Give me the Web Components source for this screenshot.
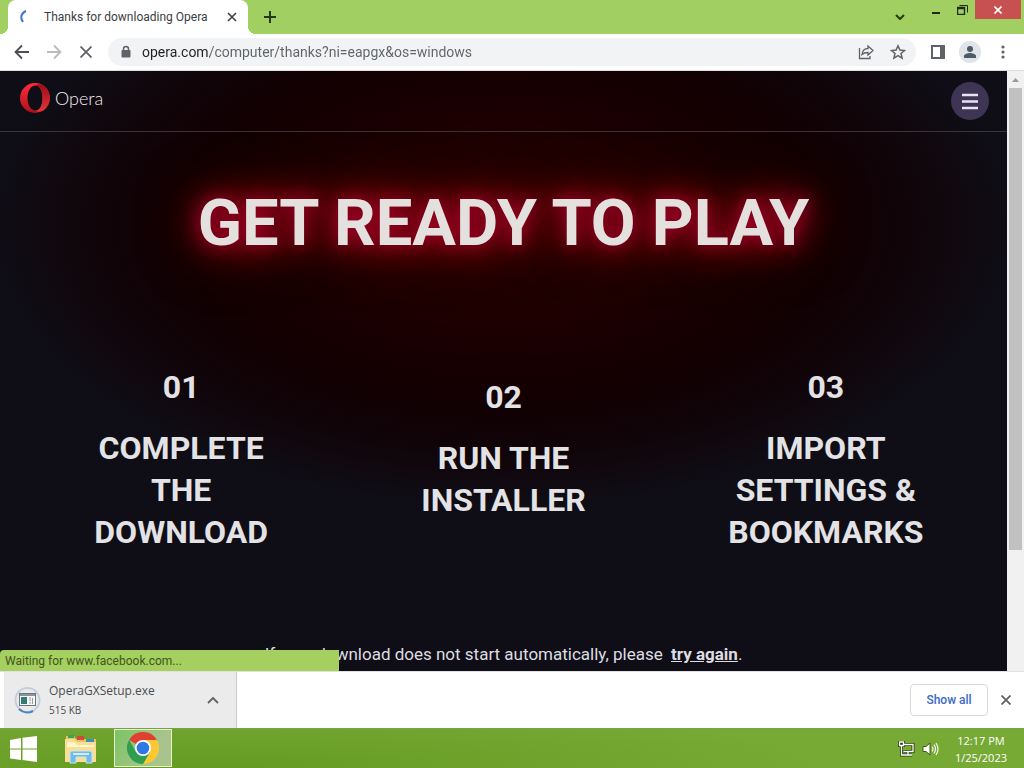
<!DOCTYPE html>
<html lang="en">
<head>
<meta charset="utf-8">
<title>Thanks for downloading Opera</title>
<style>
  html, body { height: 100%; margin: 0; }
  body { font-family: "Open Sans", "Noto Sans", sans-serif; font-size: 12px; color: #3c4043; overflow: hidden; }
</style>
</head>
<body>
<desktop-screen></desktop-screen>

<script>
function define(name, markup) {
  const template = document.createElement('template');
  template.innerHTML = `<style>
    *, *::before, *::after { box-sizing: border-box; }
    button { font: inherit; color: inherit; background: none; border: 0; padding: 0; margin: 0; display: grid; place-items: center; }
    svg { display: block; }
    h1, h2, p { margin: 0; }
  </style>` + markup;
  customElements.define(name, class extends HTMLElement {
    constructor() {
      super();
      this.attachShadow({ mode: 'open' }).append(template.content.cloneNode(true));
    }
  });
}

define('tab-strip', `<style>
  :host { display: flex; height: 34px; background: #a2cf61; justify-content: space-between; }
  .left { display: flex; align-items: flex-end; padding-left: 8px; }
  .tab { position: relative; display: flex; align-items: center; width: 240px; height: 34px; padding: 0 8px 0 12px; background: #fff; border-radius: 8px 8px 0 0; }
  .tab::before, .tab::after { content: ""; position: absolute; bottom: 0; width: 8px; height: 8px; }
  .tab::before { left: -8px; background: radial-gradient(circle at 0 0, transparent 8px, #fff 8px); }
  .tab::after { right: -8px; background: radial-gradient(circle at 100% 0, transparent 8px, #fff 8px); }
  .title { flex: 1; padding-left: 8px; white-space: nowrap; font: 12px Roboto, sans-serif; }
  .close { width: 16px; height: 16px; }
  .add { width: 28px; height: 34px; margin-left: 8px; }
  .win { display: flex; align-items: flex-start; }
  .win button { width: 26px; height: 19px; }
  .win .more { width: 30px; height: 34px; margin-right: 8px; }
  .win .quit { width: 46px; background: #c75050; margin-right: 3px; }
</style>
<div class="left">
  <div class="tab">
    <svg width="16" height="16" viewBox="0 0 16 16"><path d="M6 2C1 4 0 9 3 13" fill="none" stroke="#3b74d8" stroke-width="2"/></svg>
    <span class="title">Thanks for downloading Opera</span>
    <button class="close" aria-label="Close tab"><svg width="10" height="10" viewBox="0 0 10 10"><path d="M1 1l8 8M9 1l-8 8" stroke="#3c4043" stroke-width="1.600"/></svg></button>
  </div>
  <button class="add" aria-label="New tab"><svg width="12" height="12" viewBox="0 0 12 12"><path d="M6 0v12M0 6h12" stroke="#26371a" stroke-width="2"/></svg></button>
</div>
<div class="win">
  <button class="more" aria-label="Search tabs"><svg width="10" height="6" viewBox="0 0 10 6"><path d="M1 1l4 4 4-4" fill="none" stroke="#263c10" stroke-width="2"/></svg></button>
  <button aria-label="Minimize"><svg width="8" height="10" viewBox="0 0 8 10"><path d="M0 8h8" stroke="#1d2a10" stroke-width="2"/></svg></button>
  <button aria-label="Restore"><svg width="11" height="10" viewBox="0 0 11 10"><path d="M.5 2.500h7v7h-7zM0 3.500h8" fill="none" stroke="#1d2a10" stroke-width="1.400"/><path d="M2.500 .5h8v7" fill="none" stroke="#1d2a10"/></svg></button>
  <button class="quit" aria-label="Close"><svg width="8" height="8" viewBox="0 0 8 8"><path d="M.5.5l7 7M7.500.5l-7 7" stroke="#fff" stroke-width="1.600"/></svg></button>
</div>`);

define('tool-bar', `<style>
  :host { display: flex; align-items: center; height: 37px; background: #fff; border-bottom: 1px solid #dcdfe2; color: #5f6368; }
  .nav { display: flex; padding-left: 6px; }
  .nav button { width: 32px; height: 28px; }
  .box { flex: 1; display: flex; align-items: center; height: 28px; margin-left: 6px; padding: 0 2px 0 12px; border-radius: 14px; background: #f1f3f4; }
  .box svg { flex: none; }
  input { flex: 1; min-width: 0; margin: 0 0 0 10px; padding: 0; border: 0; outline: 0; height: 26px;
    font: 14px Roboto, sans-serif; color: transparent;
    background: linear-gradient(to right, #202124 68px, #5f6368 68px); background-clip: text; -webkit-background-clip: text; }
  .box button { width: 32px; height: 28px; }
  .end { display: flex; padding-left: 6px; padding-right: 4px; }
  .end button { width: 32px; height: 28px; }
  .end .dots { width: 34px; }
</style>
<div class="nav">
  <button aria-label="Back"><svg width="16" height="16" viewBox="0 0 16 16"><path d="M15 8H2M8 1.500L1.500 8 8 14.500" fill="none" stroke="#4c5054" stroke-width="1.800"/></svg></button>
  <button aria-label="Forward"><svg width="16" height="16" viewBox="0 0 16 16"><path d="M1 8h13M8 1.500L14.500 8 8 14.500" fill="none" stroke="#babcbe" stroke-width="1.800"/></svg></button>
  <button aria-label="Stop"><svg width="12" height="12" viewBox="0 0 12 12"><path d="M.5.5l11 11M11.500.5l-11 11" stroke="#5f6368" stroke-width="1.800"/></svg></button>
</div>
<div class="box">
  <svg width="12" height="14" viewBox="0 0 12 14"><rect x="1.500" y="5" width="9" height="7.500" rx="1" fill="#5f6368"/><path d="M3.500 6V4a2.500 2.500 0 015 0v2" fill="none" stroke="#5f6368" stroke-width="1.500"/></svg>
  <input type="text" aria-label="Address" value="opera.com/computer/thanks?ni=eapgx&amp;os=windows">
  <button aria-label="Share"><svg width="16" height="16" viewBox="0 0 16 16"><path d="M1.500 4v10.500h10.500V12M4 10.500C4.500 6 7 4.500 10 4.500V2l5 4.500-5 4.500V8.500C7 8.500 5.500 9 4 10.500z" fill="none" stroke="#5f6368" stroke-width="1.300"/></svg></button>
  <button aria-label="Bookmark"><svg width="16" height="16" viewBox="0 0 16 16"><path d="M8 1.800l1.900 4.300 4.600.4-3.500 3 1.100 4.600L8 11.700l-4.100 2.400L5 9.500l-3.500-3 4.600-.4z" fill="none" stroke="#5f6368" stroke-width="1.500"/></svg></button>
</div>
<div class="end">
  <button aria-label="Side panel"><svg width="14" height="14" viewBox="0 0 14 14"><rect x="1" y="1" width="12" height="12" fill="none" stroke="#5f6368" stroke-width="2"/><path d="M9 1h4v12H9z" fill="#5f6368"/></svg></button>
  <button aria-label="Profile"><svg width="22" height="22" viewBox="0 0 22 22"><circle cx="11" cy="11" r="11" fill="#dfe3ea"/><circle cx="11" cy="8" r="3" fill="#4f5a68"/><path d="M5 17v-2c0-2 4-3 6-3s6 1 6 3v2z" fill="#4f5a68"/></svg></button>
  <button class="dots" aria-label="Menu"><svg width="4" height="14" viewBox="0 0 4 14" fill="#5f6368"><circle cx="2" cy="2" r="1.600"/><circle cx="2" cy="7" r="1.600"/><circle cx="2" cy="12" r="1.600"/></svg></button>
</div>`);

define('site-header', `<style>
  :host { display: flex; align-items: center; justify-content: space-between; height: 61px; padding: 0 18px 0 20px; border-bottom: 1px solid #3b3338; }
  a { display: flex; align-items: center; gap: 5px; padding-bottom: 6px; text-decoration: none; color: #f3f0f2; font: 300 18px/32px Lato, sans-serif; }
  button { width: 38px; height: 38px; border-radius: 50%; background: #3d3553; }
</style>
<a href="#"><svg width="30" height="30" viewBox="0 0 30 30">
  <defs><linearGradient id="o" x1="0" y1="0" x2="0" y2="1"><stop offset="0" stop-color="#ff2b3b"/><stop offset="1" stop-color="#b0101c"/></linearGradient>
  <linearGradient id="p" x1="0" y1="0" x2="0" y2="1"><stop offset="0" stop-color="#9c0a16"/><stop offset="1" stop-color="#e0383e"/></linearGradient></defs>
  <path fill="url(#o)" fill-rule="evenodd" d="M15 0a15 15 0 100 30 15 15 0 000-30zM15.500 2.500c4.500 0 7 5.500 7 12.500s-2.500 12.500-7 12.500S7.500 22 7.500 15s3.500-12.500 8-12.500z"/>
  <path fill="url(#p)" d="M15.500 2.500C19 0 24 2 26 5c5 6 5 14 0 20-2 3-7 5-10.500 2.500 4.500 0 7-5.500 7-12.500S20 2.500 15.500 2.500z"/></svg>Opera</a>
<button aria-label="Open menu"><svg width="18" height="17" viewBox="0 0 18 17"><path d="M1 2h16M1 8.500h16M1 15h16" stroke="#e9e2f4" stroke-width="2.600"/></svg></button>`);

define('install-step', `<style>
  :host { display: flex; flex-direction: column; align-items: center; gap: 19px; text-align: center; text-transform: uppercase;
    font: 700 32px/42px Roboto, sans-serif; color: #e3e2e5; }
  h2 { font: inherit; max-width: 210px; }
</style>
<p><slot name="number"></slot></p><h2><slot></slot></h2>`);

define('web-page', `<style>
  :host { display: block; height: 100%; overflow: hidden; color: #dedde1; font-family: Roboto, sans-serif;
    background: radial-gradient(ellipse 490px 270px at 50% 155px, #240000 0, #1e0001 35%, #120002 65%, #10050a 85%, #0f0d1600 105%), #0f0e16; }
  .hero { padding: 51px 20px 0; text-align: center; }
  h1 { font: 700 65px/80px Roboto, sans-serif; color: #e4e0de; text-shadow: 0 0 16px #a00028, 0 0 32px #a00020, 0 0 40px #900018, 0 0 64px #600008; }
  .steps { display: grid; grid-template-columns: repeat(3, 1fr); padding: 103px 20px 0; }
  .steps install-step:nth-child(even) { padding-top: 10px; }
  .retry { padding-top: 89px; text-align: center; font-size: 17px; line-height: 24px; }
  a { color: inherit; font-weight: 700; margin-left: 4px; }
</style>
<site-header></site-header>
<main>
  <div class="hero"><h1>GET READY TO PLAY</h1></div>
  <div class="steps">
    <install-step><span slot="number">01</span>Complete the download</install-step>
    <install-step><span slot="number">02</span>Run the installer</install-step>
    <install-step><span slot="number">03</span>Import settings &amp; bookmarks</install-step>
  </div>
  <p class="retry">If your download does not start automatically, please <a href="#">try again</a>.</p>
</main>`);

define('page-scrollbar', `<style>
  :host { display: flex; flex-direction: column; width: 17px; background: #f1f1f1; padding: 0 2px; }
  svg { margin: 6px 3px 5px; }
  .thumb { height: 77%; background: #c1c1c1; }
</style>
<svg width="7" height="6" viewBox="0 0 7 6"><path d="M0 5l3.500-4L7 5z" fill="#9a9a9a"/></svg><div class="thumb"></div>`);

define('status-bubble', `<style>
  :host { display: block; width: 339px; height: 21px; padding-left: 5px; background: #a5cf5e; border-radius: 4px 0 0 0; font: 12px/22px Roboto, sans-serif; color: #40551f; }
</style><slot></slot>`);

define('download-shelf', `<style>
  :host { display: flex; align-items: center; justify-content: space-between; height: 57px; background: #fff; border-top: 1px solid #dfe1e3; }
  .item { display: flex; align-items: center; align-self: stretch; width: 233px; margin-left: 4px; padding: 0 16px 0 10px; background: #ebebeb; border-right: 1px solid #c9c9c9; }
  .text { flex: 1; padding-left: 8px; }
  .name { font-size: 12px; line-height: 20px; color: #4a4d50; }
  .size { font-size: 10px; line-height: 18px; color: #4a4d50; }
  .right { display: flex; align-items: center; padding-right: 8px; gap: 8px; }
  .all { width: 78px; height: 32px; border: 1px solid #d5d8dc; border-radius: 4px; color: #3a6bc8; font: 500 12px Roboto, sans-serif; }
  .x { width: 20px; height: 20px; }
</style>
<div class="item">
  <svg width="27" height="28" viewBox="0 0 27 28"><circle cx="13.500" cy="14" r="12" fill="none" stroke="#c3cfdf" stroke-width="2"/><path d="M5 23a12 12 0 0014 2" fill="none" stroke="#4a86c2" stroke-width="2.200"/><rect x="5.500" y="7.500" width="16" height="12" fill="#f7f7f7" stroke="#6c737b"/><path d="M6 9h15" stroke="#8c959e" stroke-width="2"/><path d="M7 11h6v7H7z" fill="#347b71"/><path d="M15 12h2M15 14h2M15 17h2M18.500 12v6" stroke="#9a9a9a"/></svg>
  <div class="text"><div class="name">OperaGXSetup.exe</div><div class="size">515 KB</div></div>
  <button aria-label="Download options"><svg width="14" height="8" viewBox="0 0 14 8"><path d="M2 7l5-5 5 5" fill="none" stroke="#5f6368" stroke-width="1.800"/></svg></button>
</div>
<div class="right"><button class="all">Show all</button>
<button class="x" aria-label="Close downloads"><svg width="10" height="10" viewBox="0 0 10 10"><path d="M.5.5l9 9M9.500.5l-9 9" stroke="#5f6368" stroke-width="1.800"/></svg></button></div>`);

define('task-bar', `<style>
  :host { display: flex; align-items: center; height: 40px; border-top: 1px solid #7d9e4b; color: #fff;
    background: radial-gradient(ellipse 60% 160% at 20% 100%, #659b22, transparent), #77a935; }
  .apps { flex: 1; display: flex; height: 100%; }
  .apps button { width: 48px; height: 100%; }
  .apps .files { width: 66px; }
  .apps .chrome { width: 58px; height: 38px; border: 1px solid #e4f2c5; background: linear-gradient(120deg, #7bc464, #a8c48c 70%); }
  .tray { display: flex; align-items: center; gap: 7px; padding-right: 17px; }
  .clock { text-align: center; font: 11px/17px "Open Sans", sans-serif; padding-left: 9px; }
</style>
<div class="apps">
  <button aria-label="Start"><svg width="28" height="26" viewBox="0 0 28 26" fill="#fff"><path d="M0 4l11-2v10.500H0zM12.500 1.800L27 0v12.500H12.500zM0 13.500h11V24L0 22.500zM12.500 13.500H27V26l-14.500-2z"/></svg></button>
  <button class="files" aria-label="File Explorer"><svg width="34" height="32" viewBox="0 0 34 32">
    <path d="M2 3h8l2 3h20v22H2z" fill="#e9c465"/><path d="M4 2h6v3H4z" fill="#38a35b"/><path d="M13 3h7v4h-7z" fill="#d24a39"/><path d="M22 6h8v3h-8z" fill="#3f90bb"/>
    <path d="M1 6h9l3 3h19v20H1z" fill="#f8df93"/><path d="M3 9h7l3 3h17v2H3z" fill="#fff5cf"/>
    <path d="M6 30V20q0-2 2-2h18q2 0 2 2v10h-6v-6H12v6z" fill="#71b9e6" stroke="#c6e5f7"/><path d="M9 21h16" stroke="#d2edfb" stroke-width="2"/></svg></button>
  <button class="chrome" aria-label="Google Chrome"><svg width="32" height="32" viewBox="0 0 32 32">
    <path d="M16 16L2.140 8A16 16 0 0129.860 8z" fill="#e0402f"/><path d="M16 16V8h13.860A16 16 0 0116 32l7-12z" fill="#fcc934"/>
    <path d="M2.140 8A16 16 0 0016 32l7-12-7-1-7 1z" fill="#2f9e4f"/><circle cx="16" cy="16" r="8" fill="#fff"/><circle cx="16" cy="16" r="6.300" fill="#2f78e6"/></svg></button>
</div>
<div class="tray">
  <svg width="17" height="16" viewBox="0 0 17 16"><path d="M6 3.500h9v7H5.500M10 11v3M6 14h8M3.500 5v9h3M1.500 1v3.500h4V1zM3.500 1v3" fill="none" stroke="#263c0b" stroke-width="3"/><path d="M6 3.500h9v7H5.500M10 11v3M6 14h8M3.500 5v9h3M1.500 1v3.500h4V1z" fill="none" stroke="#fff" stroke-width="1.300"/></svg>
  <svg width="17" height="16" viewBox="0 0 17 16"><path d="M1 5.500h3L8 2v12l-4-3.500H1z" fill="#fff" stroke="#3d5c15"/><path d="M10 5.500q2 2.500 0 5M12 3.500q3 4.500 0 9M14 2q4 6 0 12" fill="none" stroke="#f4f9e8" stroke-width="1.200"/></svg>
  <div class="clock"><div>12:17 PM</div><div>1/25/2023</div></div>
</div>`);

define('desktop-screen', `<style>
  :host { display: flex; flex-direction: column; height: 100vh; }
  .view { flex: 1; min-height: 0; display: flex; position: relative; }
  web-page { flex: 1; min-width: 0; }
  status-bubble { position: absolute; left: 0; bottom: 0; }
</style>
<tab-strip></tab-strip>
<tool-bar></tool-bar>
<div class="view"><web-page></web-page><page-scrollbar></page-scrollbar><status-bubble>Waiting for www.facebook.com...</status-bubble></div>
<download-shelf></download-shelf>
<task-bar></task-bar>`);
</script>
</body>
</html>
